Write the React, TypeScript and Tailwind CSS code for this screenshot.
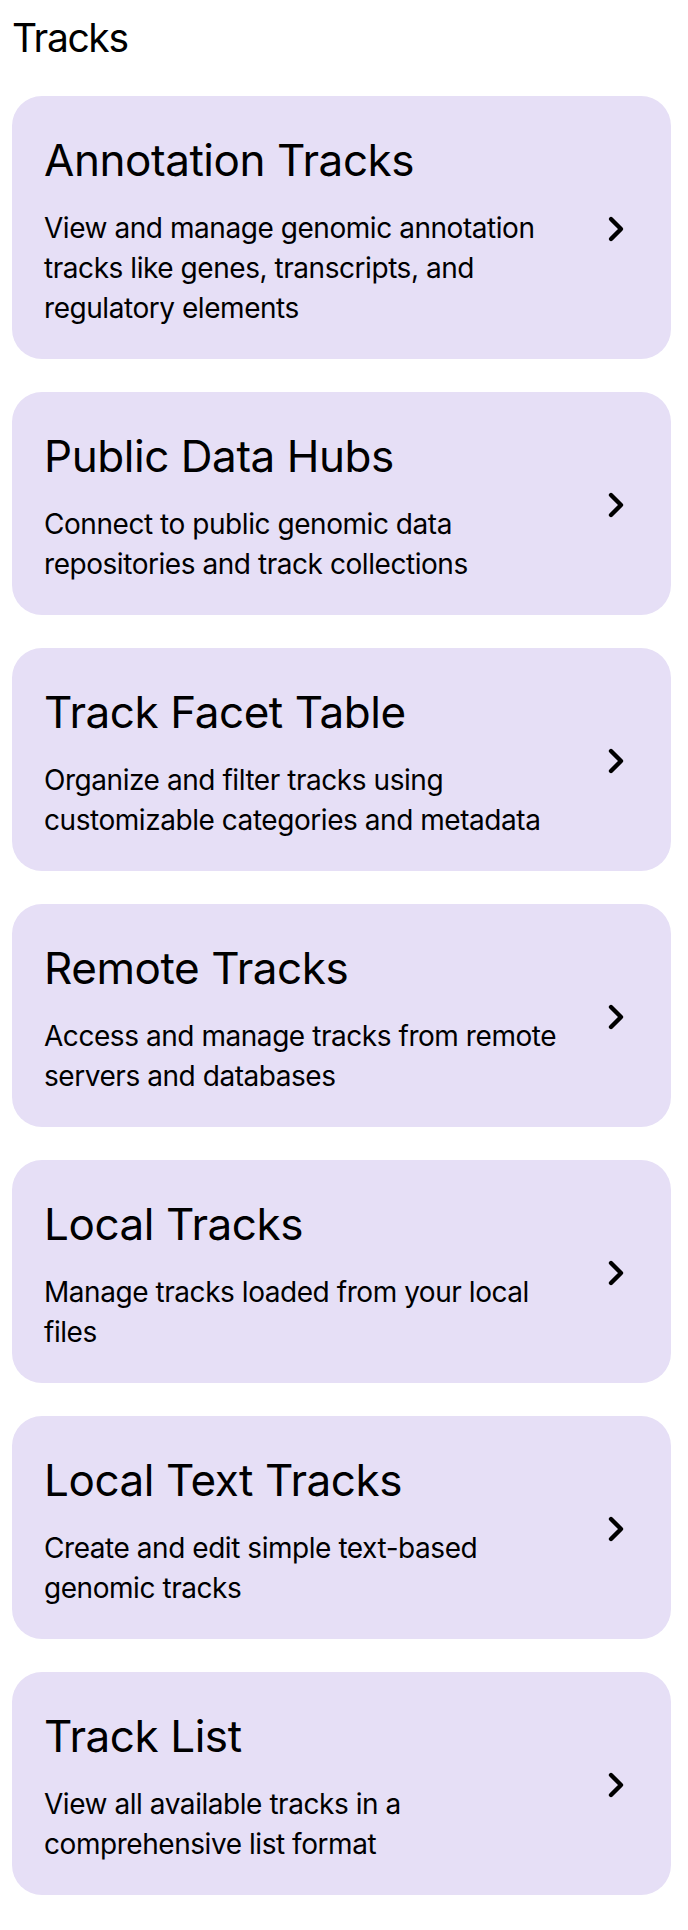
import React from 'react';
import { ChevronRight } from 'lucide-react';

type TrackPage = {
  title: string;
  description: string;
};

const pages: TrackPage[] = [
  {
    title: 'Annotation Tracks',
    description: 'View and manage genomic annotation tracks like genes, transcripts, and regulatory elements',
  },
  {
    title: 'Public Data Hubs',
    description: 'Connect to public genomic data repositories and track collections',
  },
  {
    title: 'Track Facet Table',
    description: 'Organize and filter tracks using customizable categories and metadata',
  },
  {
    title: 'Remote Tracks',
    description: 'Access and manage tracks from remote servers and databases',
  },
  {
    title: 'Local Tracks',
    description: 'Manage tracks loaded from your local files',
  },
  {
    title: 'Local Text Tracks',
    description: 'Create and edit simple text-based genomic tracks',
  },
  {
    title: 'Track List',
    description: 'View all available tracks in a comprehensive list format',
  },
];

const TrackCard: React.FC<{ page: TrackPage }> = ({ page }) => {
  return (
    <div className="flex items-center gap-[13px] rounded-[30px] bg-[#e6dff6] pl-8 pr-[35px] pt-[38px] pb-[31px]">
      <div className="flex-1 min-w-0">
        <h2 className="text-[44px] leading-[52px] font-normal tracking-[-0.01em] text-black">{page.title}</h2>
        <p className="mt-[22px] text-[28px] leading-[40px] tracking-[-0.016em] text-black">{page.description}</p>
      </div>
      <ChevronRight size={40} strokeWidth={2.6} className="-mt-1 shrink-0 text-black" />
    </div>
  );
};

export default function App() {
  return (
    <div
      className="min-h-screen bg-white pl-3 pr-[17px] pt-[18px] pb-[35px]"
      style={{ fontFamily: 'Inter, "Noto Sans", sans-serif' }}
    >
      <h1 className="text-[39px] leading-[40px] font-normal tracking-[-0.035em] text-black">Tracks</h1>
      <div className="mt-[38px] flex flex-col gap-[33px]">
        {pages.map((page) => (
          <TrackCard key={page.title} page={page} />
        ))}
      </div>
    </div>
  );
}
